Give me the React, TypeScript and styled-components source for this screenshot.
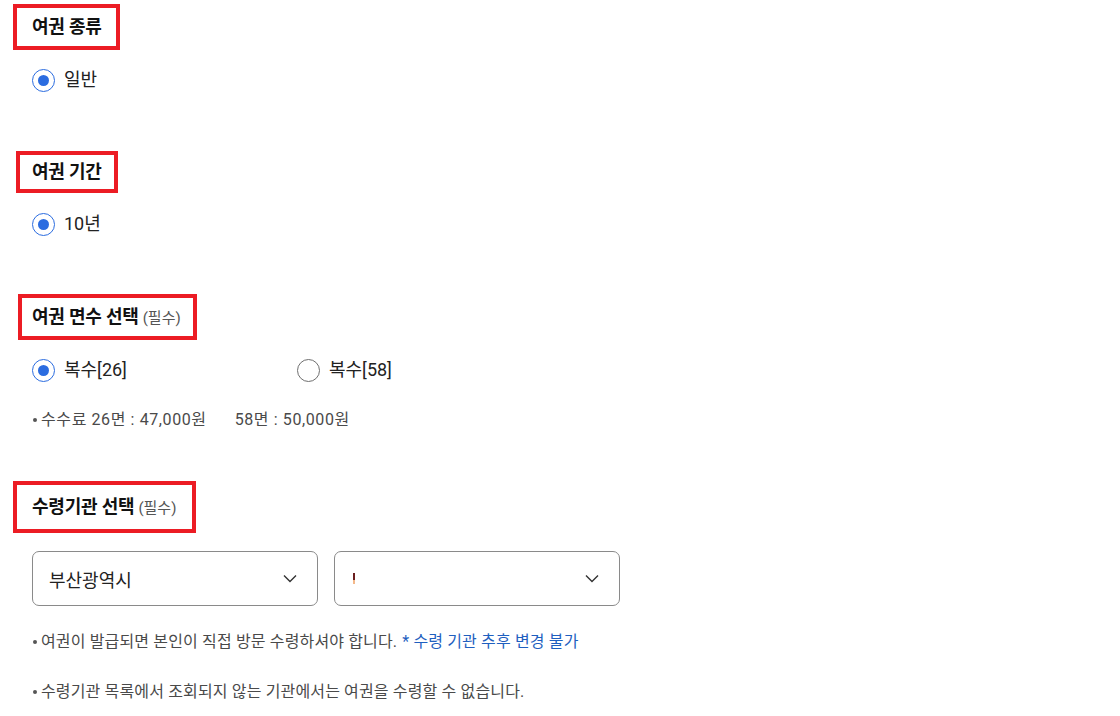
import React from "react";
import styled, { createGlobalStyle } from "styled-components";

const GlobalStyle = createGlobalStyle`
  html, body { margin: 0; padding: 0; background: #fff; }
  body {
    font-family: Roboto, "Noto Sans CJK KR", "Noto Sans", sans-serif;
    color: #222;
    -webkit-font-smoothing: antialiased;
  }
  * { box-sizing: border-box; }
`;

const Page = styled.div`
  width: 1120px;
  height: 716px;
  padding: 4px 0 0 32px;
  display: flex;
  flex-direction: column;
  overflow: hidden;
`;

const Section = styled.section<{ $gapAfter: number }>`
  display: flex;
  flex-direction: column;
  align-items: flex-start;
  margin-bottom: ${(p) => p.$gapAfter}px;
`;

const TitleBox = styled.div<{ $l: number; $r: number; $v: number }>`
  border: 4px solid #ec1c24;
  padding: ${(p) => p.$v}px ${(p) => p.$r}px ${(p) => p.$v}px ${(p) => p.$l}px;
  margin-left: ${(p) => -(p.$l + 4)}px;
  display: flex;
  align-items: baseline;
  gap: 4px;
`;

const TitleText = styled.h2`
  margin: 0;
  font-size: 18px;
  line-height: 24px;
  font-weight: 700;
  color: #111;
  letter-spacing: -0.2px;
`;

const Required = styled.span`
  font-size: 15px;
  color: #555;
  font-weight: 400;
`;

const RadioRow = styled.div<{ $top: number }>`
  display: grid;
  grid-template-columns: 265px auto;
  margin-top: ${(p) => p.$top}px;
`;

const RadioLabel = styled.label`
  display: flex;
  align-items: center;
  gap: 9px;
  font-size: 18px;
  line-height: 24px;
  color: #222;
  cursor: pointer;
`;

const RadioCircle = styled.span<{ $checked: boolean }>`
  width: 23px;
  height: 23px;
  border-radius: 50%;
  border: ${(p) => (p.$checked ? "1.5px solid #2b6ce0" : "1px solid #6f6f6f")};
  display: flex;
  align-items: center;
  justify-content: center;
  background: #fff;
  &::after {
    content: "";
    width: 11px;
    height: 11px;
    border-radius: 50%;
    background: #2b6ce0;
    display: ${(p) => (p.$checked ? "block" : "none")};
  }
`;

const Note = styled.p<{ $top: number; $ls: number }>`
  margin: ${(p) => p.$top}px 0 0 0;
  font-size: 16px;
  line-height: 22px;
  color: #4a4a4a;
  display: flex;
  align-items: center;
  letter-spacing: ${(p) => p.$ls}px;
  white-space: pre;
`;

const Bullet = styled.span`
  width: 4px;
  height: 4px;
  border-radius: 50%;
  background: #555;
  margin: 0 4px 0 1px;
`;

const Spacer = styled.span`
  display: inline-block;
  width: 28px;
`;

const Blue = styled.span`
  color: #1f5fbf;
  margin-left: 5px;
`;

const SelectRow = styled.div`
  display: flex;
  gap: 16px;
  margin-top: 18px;
`;

const SelectBox = styled.div`
  width: 286px;
  height: 55px;
  border: 1px solid #8a8a8a;
  border-radius: 7px;
  display: flex;
  align-items: center;
  justify-content: space-between;
  padding: 0 20px 0 16px;
  font-size: 18px;
  color: #222;
`;

const Caret = styled.span`
  display: inline-block;
  width: 2px;
  height: 11px;
  background: linear-gradient(to bottom, #6b1f1f 0 60%, #f3b88a 60% 100%);
  margin-left: 2px;
`;

const Chevron = () => (
  <svg width="14" height="9" viewBox="0 0 14 9" fill="none">
    <path d="M1 1.5L7 7.5L13 1.5" stroke="#333" strokeWidth="1.4" />
  </svg>
);

const Radio = ({ checked, label }: { checked: boolean; label: string }) => (
  <RadioLabel>
    <RadioCircle $checked={checked} />
    {label}
  </RadioLabel>
);

export default function App() {
  return (
    <>
      <GlobalStyle />
      <Page>
        <Section $gapAfter={59}>
          <TitleBox $l={15} $r={14} $v={7}>
            <TitleText>여권 종류</TitleText>
          </TitleBox>
          <RadioRow $top={18}>
            <Radio checked label="일반" />
          </RadioRow>
        </Section>

        <Section $gapAfter={58}>
          <TitleBox $l={12} $r={12} $v={5}>
            <TitleText>여권 기간</TitleText>
          </TitleBox>
          <RadioRow $top={19}>
            <Radio checked label="10년" />
          </RadioRow>
        </Section>

        <Section $gapAfter={50}>
          <TitleBox $l={10} $r={12} $v={7}>
            <TitleText>여권 면수 선택</TitleText>
            <Required>(필수)</Required>
          </TitleBox>
          <RadioRow $top={18}>
            <Radio checked label="복수[26]" />
            <Radio checked={false} label="복수[58]" />
          </RadioRow>
          <Note $top={27} $ls={0.6}>
            <Bullet />
            {"수수료 26면 : 47,000원"}
            <Spacer />
            {"58면 : 50,000원"}
          </Note>
        </Section>

        <Section $gapAfter={0}>
          <TitleBox $l={15} $r={16} $v={10}>
            <TitleText>수령기관 선택</TitleText>
            <Required>(필수)</Required>
          </TitleBox>
          <SelectRow>
            <SelectBox>
              <span>부산광역시</span>
              <Chevron />
            </SelectBox>
            <SelectBox>
              <Caret />
              <Chevron />
            </SelectBox>
          </SelectRow>
          <Note $top={25} $ls={0.15}>
            <Bullet />
            {"여권이 발급되면 본인이 직접 방문 수령하셔야 합니다."}
            <Blue>* 수령 기관 추후 변경 불가</Blue>
          </Note>
          <Note $top={28} $ls={0.15}>
            <Bullet />
            {"수령기관 목록에서 조회되지 않는 기관에서는 여권을 수령할 수 없습니다."}
          </Note>
        </Section>
      </Page>
    </>
  );
}
